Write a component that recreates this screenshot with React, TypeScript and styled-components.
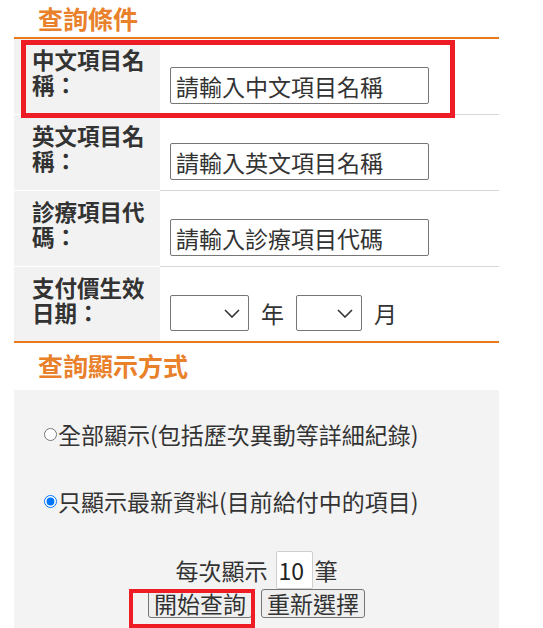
import React from 'react';
import styled, { createGlobalStyle } from 'styled-components';

const ORANGE = '#e8791c';
const TEXT = '#333333';

const GlobalStyle = createGlobalStyle`
  body {
    margin: 0;
    background: #ffffff;
    font-family: "Noto Sans CJK TC", "Noto Sans", sans-serif;
    color: ${TEXT};
  }
`;

const Page = styled.div`
  position: relative;
  width: 485px;
  margin-left: 14px;
`;

const SectionTitle = styled.h2<{ $top: number; $bottom: number }>`
  margin: 0;
  padding: ${props => props.$top}px 0 ${props => props.$bottom}px 24px;
  font-size: 25px;
  line-height: 36px;
  font-weight: bold;
  color: #e9802a;
`;

const FormTable = styled.div`
  border-top: 2px solid ${ORANGE};
  border-bottom: 2px solid ${ORANGE};
`;

const Row = styled.div<{ $last?: boolean }>`
  display: grid;
  grid-template-columns: 146px 1fr;
  border-bottom: ${props => (props.$last ? 'none' : '1px solid #d6d6d6')};
`;

const Label = styled.div<{ $last?: boolean }>`
  background: #f2f2f2;
  padding: 8px 8px ${props => (props.$last ? 16 : 17)}px 18px;
  font-size: 22.5px;
  line-height: 25px;
  font-weight: bold;
  color: ${TEXT};
  margin-bottom: ${props => (props.$last ? '0' : '-1px')};
  border-bottom: ${props => (props.$last ? 'none' : '1px solid #ffffff')};
`;

const ValueCell = styled.div`
  display: flex;
  flex-direction: column;
  justify-content: flex-end;
  padding: 0 0 10px 10px;
`;

const Field = styled.div`
  display: flex;
  align-items: center;
  gap: 12px;
  font-size: 23px;
  line-height: 25px;
`;

const TextInput = styled.input`
  box-sizing: border-box;
  width: 259px;
  height: 37px;
  padding: 0 5px;
  border: 1px solid #767676;
  border-radius: 2px;
  font-family: inherit;
  font-size: 23px;
  color: ${TEXT};

  &::placeholder {
    color: ${TEXT};
    opacity: 1;
  }
`;

const SelectWrap = styled.span`
  position: relative;
  display: inline-flex;
`;

const Select = styled.select<{ $width: number }>`
  box-sizing: border-box;
  width: ${props => props.$width}px;
  height: 36px;
  border: 1px solid #767676;
  border-radius: 2px;
  background: #ffffff;
  appearance: none;
  font-family: inherit;
  font-size: 22px;
`;

const Chevron = styled.svg`
  position: absolute;
  right: 9px;
  top: 14px;
  width: 16px;
  height: 9px;
  pointer-events: none;
`;

const DisplayPanel = styled.div`
  background: #f3f3f3;
  padding: 32px 0 20px;
`;

const Options = styled.div`
  display: flex;
  flex-direction: column;
  gap: 42px;
  padding-left: 30px;
`;

const Option = styled.label`
  display: flex;
  align-items: center;
  font-size: 23px;
  line-height: 25px;
  color: ${TEXT};
`;

const Radio = styled.input`
  width: 13px;
  height: 13px;
  margin: 0 1px 0 0;
`;

const CountRow = styled.div`
  display: flex;
  justify-content: center;
  align-items: center;
  margin-top: 37px;
  font-size: 23px;
  line-height: 25px;
  color: ${TEXT};
`;

const CountInput = styled.input`
  box-sizing: border-box;
  width: 37px;
  height: 38px;
  margin: 0 2px 0 8px;
  padding: 0 2px;
  border: 1px solid #cfcfcf;
  border-radius: 2px;
  background: #ffffff;
  font-family: inherit;
  font-size: 23px;
  color: #222222;
`;

const ButtonRow = styled.div`
  display: flex;
  justify-content: center;
  gap: 9px;
`;

const Button = styled.button`
  box-sizing: border-box;
  height: 29px;
  padding: 0 5px;
  border: 1px solid #767676;
  border-radius: 3px;
  background: #efefef;
  font-family: inherit;
  font-size: 23px;
  line-height: 1;
  color: ${TEXT};
`;

const Highlight = styled.div<{ $left: number; $top: number; $width: number; $height: number; $stroke: number }>`
  position: absolute;
  left: ${props => props.$left}px;
  top: ${props => props.$top}px;
  width: ${props => props.$width}px;
  height: ${props => props.$height}px;
  box-sizing: border-box;
  border: ${props => props.$stroke}px solid #ee1c24;
  pointer-events: none;
`;

const textFields = [
  { label: '中文項目名稱：', placeholder: '請輸入中文項目名稱' },
  { label: '英文項目名稱：', placeholder: '請輸入英文項目名稱' },
  { label: '診療項目代碼：', placeholder: '請輸入診療項目代碼' },
];

const DateSelect: React.FC<{ width: number }> = ({ width }) => (
  <SelectWrap>
    <Select $width={width} defaultValue="">
      <option value=""></option>
    </Select>
    <Chevron viewBox="0 0 16 9">
      <path d="M1 1l7 7 7-7" fill="none" stroke="#333" strokeWidth="1.6" />
    </Chevron>
  </SelectWrap>
);

const App: React.FC = () => {
  return (
    <Page>
      <GlobalStyle />
      <SectionTitle $top={0} $bottom={1}>查詢條件</SectionTitle>
      <FormTable>
        {textFields.map(field => (
          <Row key={field.label}>
            <Label>{field.label}</Label>
            <ValueCell>
              <Field>
                <TextInput type="text" placeholder={field.placeholder} />
              </Field>
            </ValueCell>
          </Row>
        ))}
        <Row $last>
          <Label $last>支付價生效日期：</Label>
          <ValueCell>
            <Field>
              <DateSelect width={79} />
              <span>年</span>
              <DateSelect width={66} />
              <span>月</span>
            </Field>
          </ValueCell>
        </Row>
      </FormTable>

      <SectionTitle $top={4} $bottom={7}>查詢顯示方式</SectionTitle>
      <DisplayPanel>
        <Options>
          <Option>
            <Radio type="radio" name="mode" />
            全部顯示(包括歷次異動等詳細紀錄)
          </Option>
          <Option>
            <Radio type="radio" name="mode" defaultChecked />
            只顯示最新資料(目前給付中的項目)
          </Option>
        </Options>
        <CountRow>
          每次顯示
          <CountInput type="text" defaultValue="10" />
          筆
        </CountRow>
        <ButtonRow>
          <Button type="button">開始查詢</Button>
          <Button type="button">重新選擇</Button>
        </ButtonRow>
      </DisplayPanel>

      <Highlight $left={7} $top={40} $width={434} $height={78} $stroke={5} />
      <Highlight $left={115} $top={589} $width={126} $height={39} $stroke={4} />
    </Page>
  );
};

export default App;
